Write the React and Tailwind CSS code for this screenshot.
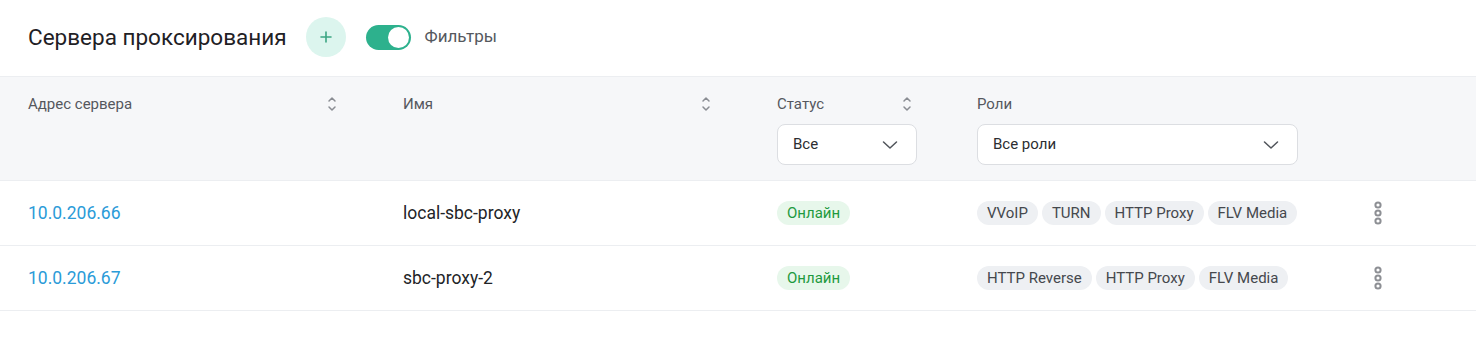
import React from "react";

const servers = [
  {
    ip: "10.0.206.66",
    name: "local-sbc-proxy",
    status: "Онлайн",
    roles: ["VVoIP", "TURN", "HTTP Proxy", "FLV Media"],
  },
  {
    ip: "10.0.206.67",
    name: "sbc-proxy-2",
    status: "Онлайн",
    roles: ["HTTP Reverse", "HTTP Proxy", "FLV Media"],
  },
];

const cols = "grid grid-cols-[375px_374px_200px_381px_1fr]";

function SortIcon() {
  return (
    <svg width="12" height="20" viewBox="0 0 12 20" fill="none" stroke="#8a8d93" strokeWidth="1.5" strokeLinecap="round" strokeLinejoin="round">
      <path d="M3 7 L6 4 L9 7" />
      <path d="M3 13 L6 16 L9 13" />
    </svg>
  );
}

function Chevron() {
  return (
    <svg width="16" height="16" viewBox="0 0 16 16" fill="none" stroke="#50545a" strokeWidth="1.5" strokeLinecap="round" strokeLinejoin="round">
      <path d="M1.5 5 L8 11 L14.5 5" />
    </svg>
  );
}

function Dots() {
  return (
    <svg width="10" height="26" viewBox="0 0 10 26" fill="none" stroke="#8d8f94" strokeWidth="2">
      <circle cx="5" cy="5" r="2.6" />
      <circle cx="5" cy="13" r="2.6" />
      <circle cx="5" cy="21" r="2.6" />
    </svg>
  );
}

function Select({ value, width }) {
  return (
    <div className={`${width} h-[41px] flex items-center justify-between rounded-lg border border-[#dcdee2] bg-white pl-[15px] pr-[18px] text-[15px] text-[#2b2d31]`}>
      <span>{value}</span>
      <Chevron />
    </div>
  );
}

export default function App() {
  return (
    <div className="w-[1476px] h-[351px] bg-white font-['Roboto',sans-serif]">
      <div className="h-[76px] flex items-center pl-7 pb-[2px]">
        <h1 className="text-[22.5px] text-[#1f2125] leading-none">Сервера проксирования</h1>
        <button className="ml-[19px] w-10 h-10 rounded-full bg-[#dcf5ee] flex items-center justify-center">
          <svg width="14" height="14" viewBox="0 0 14 14" stroke="#3ba582" strokeWidth="1.6" strokeLinecap="round">
            <path d="M7 2 V12 M2 7 H12" />
          </svg>
        </button>
        <div className="ml-5 w-[45px] h-[25px] rounded-full bg-[#2db18d] flex items-center justify-end pr-[2px]">
          <div className="w-[21px] h-[21px] rounded-full bg-white" />
        </div>
        <span className="ml-[14px] text-[17px] text-[#55585e]">Фильтры</span>
      </div>

      <div className={`${cols} bg-[#f6f7f9] border-t border-b border-[#eceef1] pl-7 pt-4 h-[105px] text-[15px] text-[#55585e]`}>
        <div className="flex h-[22px] items-center justify-between pr-[65px]">
          <span>Адрес сервера</span>
          <SortIcon />
        </div>
        <div className="flex h-[22px] items-center justify-between pr-[65px]">
          <span>Имя</span>
          <SortIcon />
        </div>
        <div className="flex flex-col w-[140px]">
          <div className="flex h-[22px] items-center justify-between pr-1">
            <span>Статус</span>
            <SortIcon />
          </div>
          <div className="mt-[9px]">
            <Select value="Все" width="w-[140px]" />
          </div>
        </div>
        <div className="flex flex-col">
          <span className="h-[22px] leading-[22px]">Роли</span>
          <div className="mt-[9px]">
            <Select value="Все роли" width="w-[321px]" />
          </div>
        </div>
        <div />
      </div>

      {servers.map((s) => (
        <div key={s.ip} className={`${cols} items-center pl-7 h-[65px] border-b border-[#eceef1]`}>
          <a className="text-[17.5px] text-[#2b9bd8]">{s.ip}</a>
          <span className="text-[17.5px] text-[#222427]">{s.name}</span>
          <div>
            <span className="inline-flex items-center h-6 px-[10px] rounded-full bg-[#e7f7eb] text-[15px] text-[#1e9a3e]">{s.status}</span>
          </div>
          <div className="flex gap-1">
            {s.roles.map((r) => (
              <span key={r} className="inline-flex items-center h-6 px-[10px] rounded-full bg-[#eef0f3] text-[15px] text-[#45484d]">{r}</span>
            ))}
          </div>
          <div className="flex pl-[15px]">
            <Dots />
          </div>
        </div>
      ))}
    </div>
  );
}
